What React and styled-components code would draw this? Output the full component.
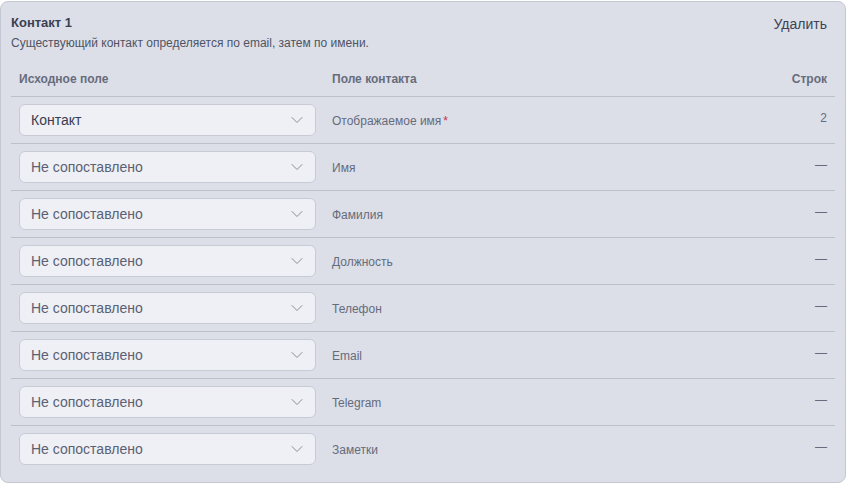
import React from 'react'
import styled, { createGlobalStyle } from 'styled-components'

const GlobalStyle = createGlobalStyle`
  html, body {
    margin: 0;
    padding: 0;
    background: #ffffff;
    font-family: "Liberation Sans", Arial, sans-serif;
  }
`

const rows = [
  { source: 'Контакт', field: 'Отображаемое имя', required: true, count: '2', mapped: true },
  { source: 'Не сопоставлено', field: 'Имя', count: '—' },
  { source: 'Не сопоставлено', field: 'Фамилия', count: '—' },
  { source: 'Не сопоставлено', field: 'Должность', count: '—' },
  { source: 'Не сопоставлено', field: 'Телефон', count: '—' },
  { source: 'Не сопоставлено', field: 'Email', count: '—' },
  { source: 'Не сопоставлено', field: 'Telegram', count: '—' },
  { source: 'Не сопоставлено', field: 'Заметки', count: '—' },
]

function Chevron() {
  return (
    <svg width="12" height="8" viewBox="0 0 12 8" fill="none">
      <path d="M1 1.5L6 6.5L11 1.5" stroke="#878c9a" strokeWidth="1" strokeLinecap="round" strokeLinejoin="round" />
    </svg>
  )
}

function App() {
  return (
    <>
      <GlobalStyle />
      <Card>
        <CardHeader>
          <div>
            <Title>Контакт 1</Title>
            <Hint>Существующий контакт определяется по email, затем по имени.</Hint>
          </div>
          <DeleteButton>Удалить</DeleteButton>
        </CardHeader>

        <Table>
          <thead>
            <tr>
              <Th>Исходное поле</Th>
              <Th>Поле контакта</Th>
              <Th align="right">Строк</Th>
            </tr>
          </thead>
          <tbody>
            {rows.map((r, i) => (
              <Row key={i} last={i === rows.length - 1}>
                <SelectCell>
                  <Select mapped={r.mapped}>
                    <span>{r.source}</span>
                    <Chevron />
                  </Select>
                </SelectCell>
                <FieldCell>
                  {r.field}
                  {r.required && <Req>*</Req>}
                </FieldCell>
                <CountCell>{r.count}</CountCell>
              </Row>
            ))}
          </tbody>
        </Table>
      </Card>
    </>
  )
}

export default App

const Card = styled.div`
margin-top: 1px;
width: 846px;
height: 482px;
box-sizing: border-box;
background-color: #dcdfe8;
border: 1px solid #c3c7d1;
border-radius: 8px;
padding: 12px 10px 0 10px;
`

const CardHeader = styled.div`
display: flex;
justify-content: space-between;
align-items: flex-start;
`

const Title = styled.div`
font-size: 13px;
font-weight: 700;
color: #3a3f51;
line-height: 18px;
`

const Hint = styled.div`
margin-top: 3px;
font-size: 12px;
color: #4f5465;
line-height: 16px;
`

const DeleteButton = styled.button`
border: 0;
background: transparent;
font-family: inherit;
font-size: 14px;
color: #3d4254;
padding: 2px 8px 0 0;
cursor: pointer;
`

const Table = styled.table`
margin-top: 12px;
width: 100%;
border-collapse: collapse;
`

const Th = styled.th`
text-align: ${p => p.align || 'left'};
font-size: 12px;
font-weight: 700;
color: #676c7c;
padding: 8px 8px 9px 8px;
border-bottom: 1px solid #bcc0ca;
line-height: 16px;
&:first-child { width: 297px; }
`

const Row = styled.tr`
border-bottom: ${p => (p.last ? 'none' : '1px solid #bcc0ca')};
`

const SelectCell = styled.td`
padding: 7px 8px;
`

const Select = styled.div`
height: 32px;
box-sizing: border-box;
display: flex;
align-items: center;
justify-content: space-between;
padding: 0 12px 0 11px;
background-color: #eef0f5;
border: 1px solid #c7cbd5;
border-radius: 6px;
font-size: 14px;
color: ${p => (p.mapped ? '#383d4f' : '#5b6072')};
`

const FieldCell = styled.td`
padding: 2px 8px 0 8px;
font-size: 12px;
color: #666b7c;
vertical-align: middle;
`

const Req = styled.span`
color: #c9304a;
margin-left: 2px;
`

const CountCell = styled.td`
padding: 0 8px 4px 8px;
text-align: right;
font-size: 12px;
color: #666b7c;
`
